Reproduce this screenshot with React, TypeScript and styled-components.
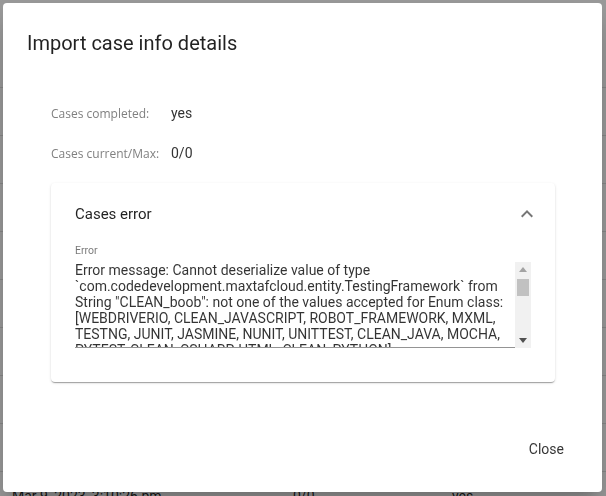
import React from "react";
import styled, { createGlobalStyle } from "styled-components";

const GlobalStyle = createGlobalStyle`
  html, body { margin: 0; padding: 0; }
  body {
    font-family: Roboto, "Liberation Sans", sans-serif;
    background: #ffffff;
    overflow: hidden;
    width: 606px;
    height: 496px;
  }
  * { box-sizing: border-box; }
`;

const Page = styled.div`
  padding-top: 40px;
`;

const PageRow = styled.div`
  display: grid;
  grid-template-columns: 281px 159px 1fr;
  align-items: center;
  height: 48px;
  padding-left: 12px;
  border-bottom: 1px solid #e0e0e0;
  font-size: 14px;
  color: rgba(0, 0, 0, 0.87);
`;

const Backdrop = styled.div`
  position: fixed;
  inset: 0;
  background: rgba(0, 0, 0, 0.4);
  padding: 3px 4px 4px 3px;
  display: flex;
`;

const Dialog = styled.div`
  flex: 1;
  background: #ffffff;
  border-radius: 4px;
  box-shadow: 0 11px 15px -7px rgba(0, 0, 0, 0.2), 0 24px 38px 3px rgba(0, 0, 0, 0.14);
  display: flex;
  flex-direction: column;
`;

const Title = styled.h2`
  margin: 0;
  padding: 24px 24px 0;
  font-size: 20px;
  line-height: 32px;
  font-weight: 400;
  color: rgba(0, 0, 0, 0.87);
`;

const Content = styled.div`
  flex: 1;
  padding: 34px 47px 0 48px;
  display: flex;
  flex-direction: column;
`;

const InfoRow = styled.div`
  display: flex;
  align-items: center;
  height: 40px;
`;

const InfoLabel = styled.span`
  width: 120px;
  font-family: "Open Sans", Roboto, sans-serif;
  font-size: 12px;
  color: #808080;
`;

const InfoValue = styled.span`
  font-size: 14px;
  color: #333333;
`;

const Card = styled.section`
  margin-top: 10px;
  background: #ffffff;
  border-radius: 4px;
  box-shadow: 0 2px 1px -1px rgba(0, 0, 0, 0.2), 0 1px 1px 0 rgba(0, 0, 0, 0.14),
    0 1px 3px 0 rgba(0, 0, 0, 0.12);
`;

const Summary = styled.div`
  height: 62px;
  padding: 0 16px 0 24px;
  display: flex;
  align-items: center;
  justify-content: space-between;
`;

const SummaryTitle = styled.span`
  font-size: 15px;
  color: rgba(0, 0, 0, 0.87);
`;

const IconButton = styled.span`
  display: flex;
  padding: 12px;
  margin-right: -12px;
  color: rgba(0, 0, 0, 0.54);
`;

const Details = styled.div`
  padding: 0 24px 34px;
`;

const FieldLabel = styled.div`
  font-size: 10.5px;
  line-height: 12px;
  margin-bottom: 5px;
  color: rgba(0, 0, 0, 0.54);
`;

const FieldBox = styled.div`
  display: flex;
  height: 86px;
  border-bottom: 1px solid rgba(0, 0, 0, 0.42);
`;

const FieldText = styled.div`
  flex: 1;
  overflow: hidden;
  font-size: 14px;
  line-height: 16px;
  color: rgba(0, 0, 0, 0.8);
  white-space: pre-wrap;
`;

const Scrollbar = styled.div`
  width: 16px;
  background: #f1f1f1;
  display: flex;
  flex-direction: column;
  margin-bottom: -1px;
`;

const ScrollArrow = styled.div`
  height: 15px;
  display: flex;
  align-items: center;
  justify-content: center;
`;

const ScrollTrack = styled.div`
  flex: 1;
  padding: 2px 2px 0;
`;

const ScrollThumb = styled.div`
  height: 17px;
  background: #c1c1c1;
`;

const Actions = styled.div`
  display: flex;
  justify-content: flex-end;
  padding: 8px;
  height: 84px;
`;

const TextButton = styled.button`
  border: none;
  background: transparent;
  font-family: Roboto, sans-serif;
  font-size: 14px;
  color: rgba(0, 0, 0, 0.8);
  padding: 6px 8px;
  height: 36px;
  margin-top: 15px;
  margin-right: 22px;
  cursor: pointer;
`;

const errorText =
  'Error message: Cannot deserialize value of type `com.codedevelopment.maxtafcloud.entity.TestingFramework` from String "CLEAN_boob": not one of the values accepted for Enum class: [WEBDRIVERIO, CLEAN_JAVASCRIPT, ROBOT_FRAMEWORK, MXML, TESTNG, JUNIT, JASMINE, NUNIT, UNITTEST, CLEAN_JAVA, MOCHA, PYTEST, CLEAN_CSHARP, HTML, CLEAN_PYTHON]';

const Triangle = ({ up }: { up?: boolean }) => (
  <svg width="8" height="5" viewBox="0 0 8 5">
    <path d={up ? "M0 5 L4 0 L8 5 Z" : "M0 0 L4 5 L8 0 Z"} fill={up ? "#a3a3a3" : "#505050"} />
  </svg>
);

const ROWS = 10;

export default function App() {
  return (
    <>
      <GlobalStyle />
      <Page>
        {Array.from({ length: ROWS }).map((_, i) => (
          <PageRow key={i}>
            {i === ROWS - 1 ? (
              <>
                <span>Mar 9, 2023, 3:10:26 pm</span>
                <span>0/0</span>
                <span>yes</span>
              </>
            ) : null}
          </PageRow>
        ))}
      </Page>
      <Backdrop>
        <Dialog>
          <Title>Import case info details</Title>
          <Content>
            <InfoRow>
              <InfoLabel>Cases completed:</InfoLabel>
              <InfoValue>yes</InfoValue>
            </InfoRow>
            <InfoRow>
              <InfoLabel>Cases current/Max:</InfoLabel>
              <InfoValue>0/0</InfoValue>
            </InfoRow>
            <Card>
              <Summary>
                <SummaryTitle>Cases error</SummaryTitle>
                <IconButton>
                  <svg width="24" height="24" viewBox="0 0 24 24">
                    <path fill="currentColor" d="M12 8l-6 6 1.41 1.41L12 10.83l4.59 4.58L18 14z" />
                  </svg>
                </IconButton>
              </Summary>
              <Details>
                <FieldLabel>Error</FieldLabel>
                <FieldBox>
                  <FieldText>{errorText}</FieldText>
                  <Scrollbar>
                    <ScrollArrow>
                      <Triangle up />
                    </ScrollArrow>
                    <ScrollTrack>
                      <ScrollThumb />
                    </ScrollTrack>
                    <ScrollArrow>
                      <Triangle />
                    </ScrollArrow>
                  </Scrollbar>
                </FieldBox>
              </Details>
            </Card>
          </Content>
          <Actions>
            <TextButton>Close</TextButton>
          </Actions>
        </Dialog>
      </Backdrop>
    </>
  );
}
